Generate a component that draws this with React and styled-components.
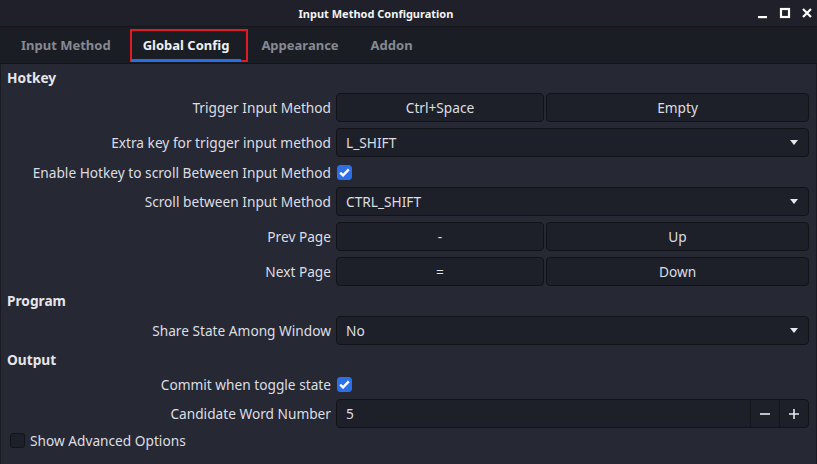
import React from 'react'
import styled, { createGlobalStyle } from 'styled-components'

const Global = createGlobalStyle`
  html, body { margin: 0; padding: 0; background: #262833; }
  body { font-family: "Noto Sans", "DejaVu Sans", sans-serif; color: #dfe1e6; }
`

const Window = styled.div`
  width: 817px;
  height: 464px;
  display: flex;
  flex-direction: column;
  background: #262833;
  overflow: hidden;
`

const TitleBar = styled.div`
  height: 26px;
  flex-shrink: 0;
  background: #1f2029;
  border-bottom: 1px solid #15161b;
  display: flex;
  align-items: center;
  justify-content: center;
  padding-right: 65px;
  position: relative;
  font-size: 11px;
  font-weight: bold;
  color: #f2f3f5;
`

const WinButtons = styled.div`
  position: absolute;
  right: 2px;
  top: 0;
  height: 26px;
  display: flex;
  align-items: center;
  gap: 6px;
`

const WinBtn = styled.div`
  width: 16px;
  height: 16px;
  display: flex;
  align-items: center;
  justify-content: center;
`

const TabBar = styled.div`
  height: 36px;
  flex-shrink: 0;
  background: #1b1d24;
  border-bottom: 1px solid #121318;
  display: flex;
  align-items: stretch;
  padding-left: 5px;
`

const Tab = styled.div`
  position: relative;
  padding: 0 16px;
  display: flex;
  align-items: center;
  font-size: 13px;
  font-weight: bold;
  color: ${p => (p.$active ? '#eef0f3' : '#868992')};
  ${p => p.$active && `
    &::before {
      content: '';
      position: absolute;
      left: 3px; right: -3px; top: 2px; bottom: 1px;
      border: 2px solid #e01b24;
    }
    &::after {
      content: '';
      position: absolute;
      left: 4px; right: 4px; bottom: 1px;
      height: 3px;
      background: #2b6de0;
    }
  `}
`

const Content = styled.div`
  flex: 1;
  padding: 5px 7px 0 0;
  display: flex;
  flex-direction: column;
  gap: 6px;
  border-left: 1px solid #1a1b22;
  border-right: 1px solid #1a1b22;
`

const Heading = styled.div`
  height: 18px;
  line-height: 18px;
  padding-left: 6px;
  font-size: 13.7px;
  font-weight: bold;
  color: #e4e6ea;
`

const Row = styled.div`
  display: grid;
  grid-template-columns: 330px 1fr;
  column-gap: 5px;
  align-items: center;
  height: ${p => p.$h || 29}px;
`

const Label = styled.div`
  text-align: right;
  font-size: 13.7px;
  color: #dcdee3;
  white-space: nowrap;
`

const Pair = styled.div`
  display: grid;
  grid-template-columns: 208px 1fr;
  gap: 2px;
  height: 29px;
`

const KeyButton = styled.div`
  background: #1e2029;
  border: 1px solid #121318;
  border-radius: 4px;
  display: flex;
  align-items: center;
  justify-content: center;
  font-size: 13.7px;
  color: #dcdee3;
`

const Combo = styled.div`
  height: 29px;
  box-sizing: border-box;
  background: #1e2029;
  border: 1px solid #121318;
  border-radius: 4px;
  display: flex;
  align-items: center;
  justify-content: space-between;
  padding: 0 10px 0 9px;
  font-size: 13.7px;
  color: #dcdee3;
`

const Arrow = styled.span`
  width: 0;
  height: 0;
  border-left: 4.5px solid transparent;
  border-right: 4.5px solid transparent;
  border-top: 5px solid #e6e8ec;
`

const Check = styled.div`
  width: 15px;
  height: 15px;
  box-sizing: border-box;
  border-radius: 3px;
  background: ${p => (p.$on ? '#2c6fe6' : '#1e2029')};
  border: 1px solid ${p => (p.$on ? '#2c6fe6' : '#121318')};
  display: flex;
  align-items: center;
  justify-content: center;
  margin-left: 1px;
`

const Spin = styled.div`
  height: 29px;
  box-sizing: border-box;
  background: #1e2029;
  border: 1px solid #121318;
  border-radius: 4px;
  display: flex;
  align-items: stretch;
  font-size: 13.7px;
  color: #dcdee3;
`

const SpinValue = styled.div`
  flex: 1;
  display: flex;
  align-items: center;
  padding-left: 9px;
`

const SpinBtn = styled.div`
  width: 28px;
  border-left: 1px solid #15161c;
  display: flex;
  align-items: center;
  justify-content: center;
`

const Advanced = styled.label`
  display: flex;
  align-items: center;
  gap: 5px;
  padding-left: 8px;
  margin-top: -3px;
  height: 18px;
  font-size: 13.7px;
  color: #dcdee3;
`

const Tick = () => (
  <svg width="11" height="9" viewBox="0 0 11 9">
    <path d="M1.2 4.6 L4.1 7.4 L9.8 1.4" fill="none" stroke="#fff" strokeWidth="2.4" />
  </svg>
)

const Checkbox = ({ on }) => <Check $on={on}>{on && <Tick />}</Check>

const ComboBox = ({ value }) => (
  <Combo>
    <span>{value}</span>
    <Arrow />
  </Combo>
)

export default function App() {
  return (
    <Window>
      <Global />
      <TitleBar>
        Input Method Configuration
        <WinButtons>
          <WinBtn>
            <svg width="12" height="12" viewBox="0 0 12 12"><rect x="1" y="9" width="9" height="2.2" fill="#fff" /></svg>
          </WinBtn>
          <WinBtn>
            <svg width="12" height="12" viewBox="0 0 12 12"><rect x="2" y="2" width="8" height="8" fill="none" stroke="#fff" strokeWidth="2.2" /></svg>
          </WinBtn>
          <WinBtn>
            <svg width="12" height="12" viewBox="0 0 12 12"><path d="M2 2 L10 10 M10 2 L2 10" stroke="#fff" strokeWidth="2.2" /></svg>
          </WinBtn>
        </WinButtons>
      </TitleBar>
      <TabBar>
        <Tab>Input Method</Tab>
        <Tab $active>Global Config</Tab>
        <Tab>Appearance</Tab>
        <Tab>Addon</Tab>
      </TabBar>
      <Content>
        <Heading>Hotkey</Heading>
        <Row>
          <Label>Trigger Input Method</Label>
          <Pair>
            <KeyButton>Ctrl+Space</KeyButton>
            <KeyButton>Empty</KeyButton>
          </Pair>
        </Row>
        <Row>
          <Label>Extra key for trigger input method</Label>
          <ComboBox value="L_SHIFT" />
        </Row>
        <Row $h={18}>
          <Label>Enable Hotkey to scroll Between Input Method</Label>
          <Checkbox on />
        </Row>
        <Row>
          <Label>Scroll between Input Method</Label>
          <ComboBox value="CTRL_SHIFT" />
        </Row>
        <Row>
          <Label>Prev Page</Label>
          <Pair>
            <KeyButton>-</KeyButton>
            <KeyButton>Up</KeyButton>
          </Pair>
        </Row>
        <Row>
          <Label>Next Page</Label>
          <Pair>
            <KeyButton>=</KeyButton>
            <KeyButton>Down</KeyButton>
          </Pair>
        </Row>
        <Heading>Program</Heading>
        <Row>
          <Label>Share State Among Window</Label>
          <ComboBox value="No" />
        </Row>
        <Heading>Output</Heading>
        <Row $h={18}>
          <Label>Commit when toggle state</Label>
          <Checkbox on />
        </Row>
        <Row>
          <Label>Candidate Word Number</Label>
          <Spin>
            <SpinValue>5</SpinValue>
            <SpinBtn>
              <svg width="12" height="12" viewBox="0 0 12 12"><rect x="1" y="5.2" width="10" height="1.6" fill="#e6e8ec" /></svg>
            </SpinBtn>
            <SpinBtn>
              <svg width="12" height="12" viewBox="0 0 12 12"><path d="M1 6 H11 M6 1 V11" stroke="#e6e8ec" strokeWidth="1.6" /></svg>
            </SpinBtn>
          </Spin>
        </Row>
        <Advanced>
          <Checkbox />
          Show Advanced Options
        </Advanced>
      </Content>
    </Window>
  )
}
